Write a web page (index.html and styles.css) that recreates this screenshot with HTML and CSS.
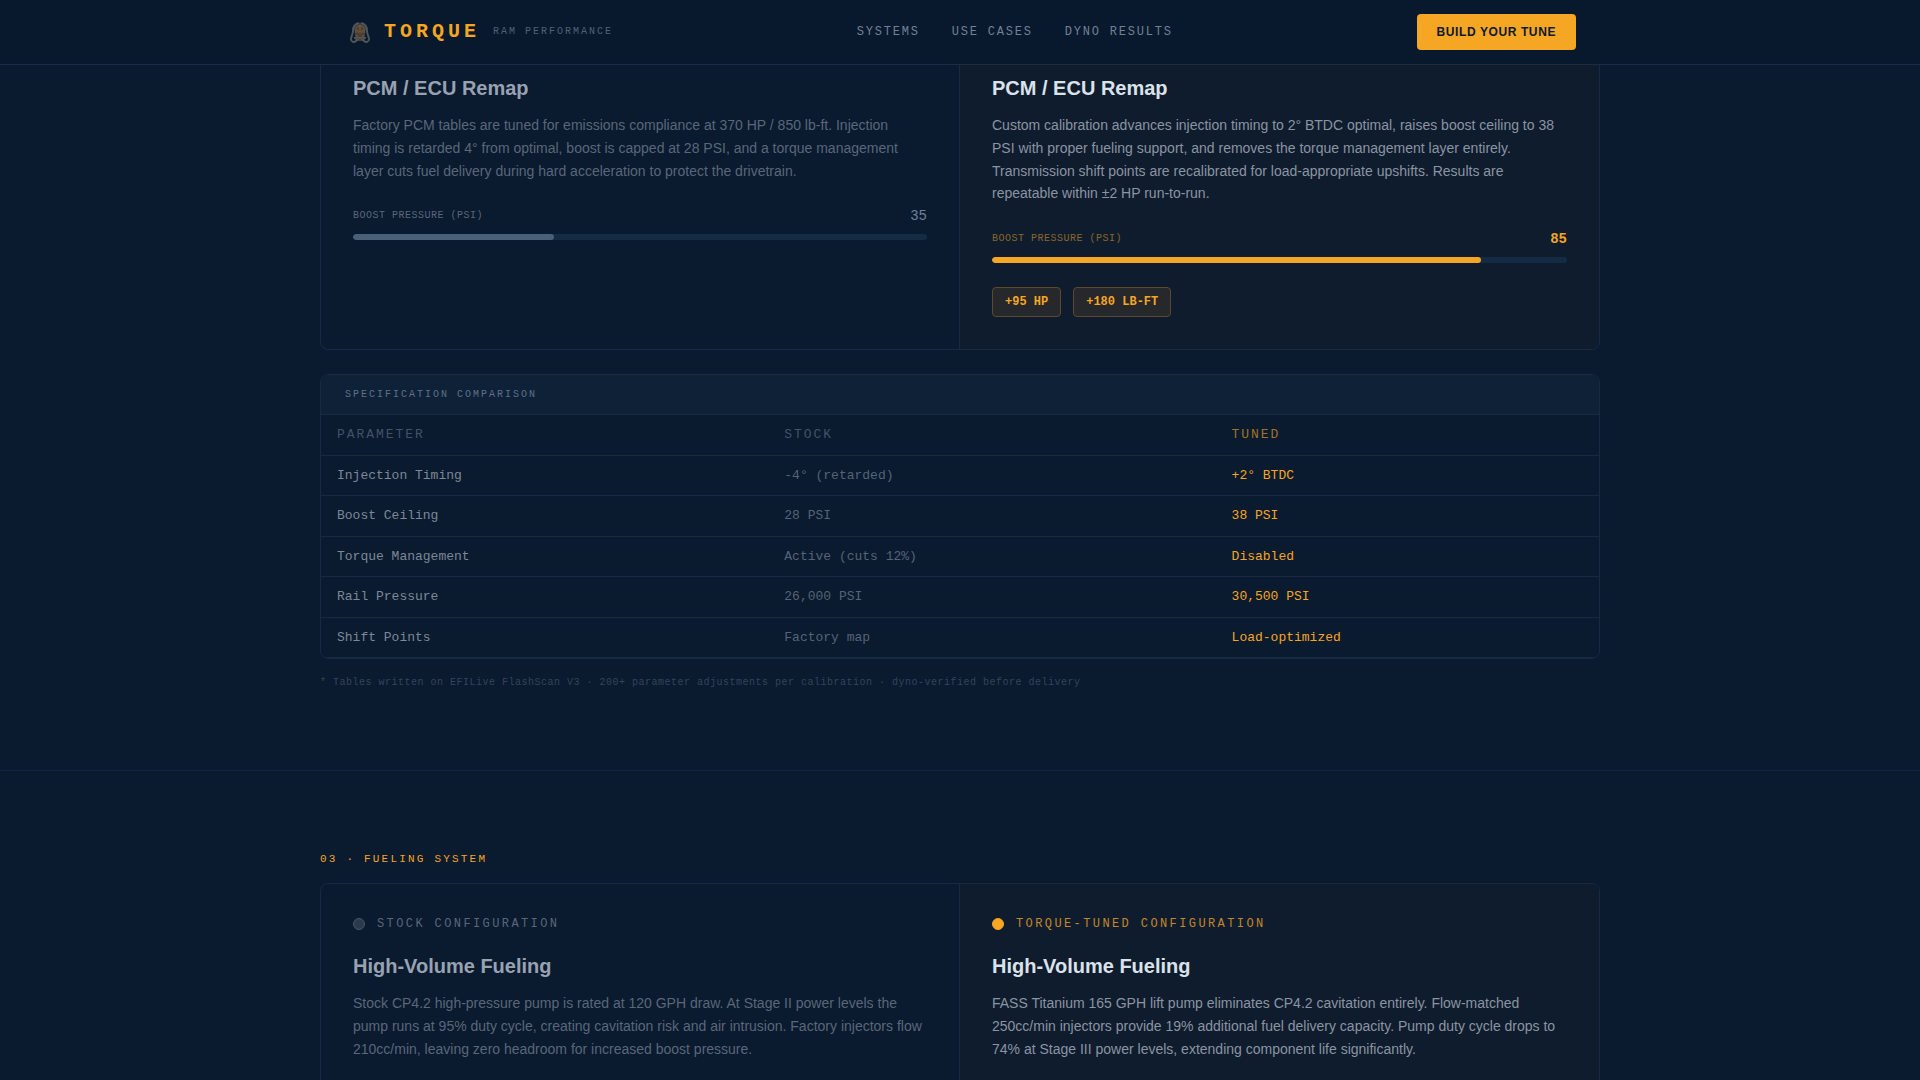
FILE: index.html
```html
<!DOCTYPE html>
<html lang="en">
<head>
    <meta charset="UTF-8">
    <meta name="viewport" content="width=device-width, initial-scale=1.0">
    <title>Torque Ram Performance</title>
    <link rel="stylesheet" href="styles.css">
</head>
<body>
    <header class="site-header">
        <div class="header-inner">
            <div class="brand">
                <svg class="brand-icon" viewBox="0 0 32 32" aria-hidden="true">
                    <path class="ram-head" d="M10 12 Q12 7 16 7 Q20 7 22 12 L21 19 L19 25 H13 L11 19 Z"/>
                    <path class="ram-horn" d="M15 7 C10 8 9 12 9 15 C9 19 7 20 7 23 C7 26 10 27 12 25 C13 23 12 21 10 22"/>
                    <path class="ram-horn" d="M17 7 C22 8 23 12 23 15 C23 19 25 20 25 23 C25 26 22 27 20 25 C19 23 20 21 22 22"/>
                    <path class="ram-brow" d="M12 17 C11 12 13 10 16 10 C19 10 21 12 20 17 M13 25 L16 21 L19 25"/>
                    <path class="ram-line" d="M13 14 L15 17 M19 14 L17 17 M12 19 L14 22 M20 19 L18 22 M16 9 V16"/>
                </svg>
                <span class="brand-name">TORQUE</span>
                <span class="brand-sub">RAM PERFORMANCE</span>
            </div>
            <nav class="nav">
                <a href="#systems">SYSTEMS</a>
                <a href="#use-cases">USE CASES</a>
                <a href="#dyno-results">DYNO RESULTS</a>
            </nav>
            <button class="cta" type="button">BUILD YOUR TUNE</button>
        </div>
    </header>

    <main id="systems">
        <section class="section section-ecu">
            <div class="container">
                <div class="compare">
                    <article class="panel stock">
                        <h3>PCM / ECU Remap</h3>
                        <p class="desc">Factory PCM tables are tuned for emissions compliance at 370 HP / 850 lb-ft. Injection timing is retarded 4° from optimal, boost is capped at 28 PSI, and a torque management layer cuts fuel delivery during hard acceleration to protect the drivetrain.</p>
                        <div class="meter">
                            <div class="meter-head">
                                <span class="meter-label">BOOST PRESSURE (PSI)</span>
                                <span class="meter-value">35</span>
                            </div>
                            <div class="track"><div class="fill" style="width: 35%"></div></div>
                        </div>
                    </article>
                    <article class="panel tuned">
                        <h3>PCM / ECU Remap</h3>
                        <p class="desc">Custom calibration advances injection timing to 2° BTDC optimal, raises boost ceiling to 38 PSI with proper fueling support, and removes the torque management layer entirely. Transmission shift points are recalibrated for load-appropriate upshifts. Results are repeatable within ±2 HP run-to-run.</p>
                        <div class="meter">
                            <div class="meter-head">
                                <span class="meter-label">BOOST PRESSURE (PSI)</span>
                                <span class="meter-value">85</span>
                            </div>
                            <div class="track"><div class="fill" style="width: 85%"></div></div>
                        </div>
                        <div class="gains">
                            <span class="gain">+95 HP</span>
                            <span class="gain">+180 LB-FT</span>
                        </div>
                    </article>
                </div>

                <div class="spec">
                    <div class="spec-title" id="spec-title">SPECIFICATION COMPARISON</div>
                    <table aria-labelledby="spec-title">
                        <thead>
                            <tr><th scope="col">PARAMETER</th><th scope="col">STOCK</th><th scope="col">TUNED</th></tr>
                        </thead>
                        <tbody>
                            <tr><td>Injection Timing</td><td>-4° (retarded)</td><td>+2° BTDC</td></tr>
                            <tr><td>Boost Ceiling</td><td>28 PSI</td><td>38 PSI</td></tr>
                            <tr><td>Torque Management</td><td>Active (cuts 12%)</td><td>Disabled</td></tr>
                            <tr><td>Rail Pressure</td><td>26,000 PSI</td><td>30,500 PSI</td></tr>
                            <tr><td>Shift Points</td><td>Factory map</td><td>Load-optimized</td></tr>
                        </tbody>
                    </table>
                </div>
                <p class="footnote">* Tables written on EFILive FlashScan V3 · 200+ parameter adjustments per calibration · dyno-verified before delivery</p>
            </div>
        </section>

        <section class="section">
            <div class="container">
                <h2 class="eyebrow">03 · FUELING SYSTEM</h2>
                <div class="compare">
                    <article class="panel stock">
                        <div class="config"><span class="dot"></span>STOCK CONFIGURATION</div>
                        <h3>High-Volume Fueling</h3>
                        <p class="desc">Stock CP4.2 high-pressure pump is rated at 120 GPH draw. At Stage II power levels the pump runs at 95% duty cycle, creating cavitation risk and air intrusion. Factory injectors flow 210cc/min, leaving zero headroom for increased boost pressure.</p>
                    </article>
                    <article class="panel tuned">
                        <div class="config"><span class="dot"></span>TORQUE-TUNED CONFIGURATION</div>
                        <h3>High-Volume Fueling</h3>
                        <p class="desc">FASS Titanium 165 GPH lift pump eliminates CP4.2 cavitation entirely. Flow-matched 250cc/min injectors provide 19% additional fuel delivery capacity. Pump duty cycle drops to 74% at Stage III power levels, extending component life significantly.</p>
                    </article>
                </div>
            </div>
        </section>
    </main>
</body>
</html>
```

FILE: styles.css
```css
:root {
    --bg: #0a1a2f;
    --strip: #0f2137;
    --line: #162a42;
    --amber: #f5a623;
    --mono: "Liberation Mono", "Courier New", monospace;
}

* {
    box-sizing: border-box;
    margin: 0;
    padding: 0;
}

body {
    height: 100vh;
    overflow: hidden;
    background: var(--bg);
    color: #dbe2ea;
    font-family: "Liberation Sans", Arial, sans-serif;
    line-height: 1.5;
}

/* header */
.site-header {
    position: sticky;
    top: 0;
    z-index: 10;
    background: #09192d;
    border-bottom: 1px solid #1a2d43;
}

.header-inner {
    display: flex;
    align-items: center;
    justify-content: space-between;
    max-width: 1280px;
    height: 64px;
    margin: 0 auto;
    padding: 0 24px;
}

.brand {
    display: flex;
    align-items: center;
}

.brand-icon {
    width: 32px;
    height: 32px;
    margin-right: 8px;
    fill: none;
}

.ram-head {
    fill: #4a3f35;
}

.ram-horn {
    stroke: #4c545c;
    stroke-width: 2;
}

.ram-brow {
    stroke: #5f5e5b;
}

.ram-line {
    stroke: #85602f;
}

.brand-name {
    margin-right: 13px;
    color: var(--amber);
    font: bold 20px/28px var(--mono);
    letter-spacing: 0.2em;
}

.brand-sub {
    color: #526074;
    font: 10px/16px var(--mono);
    letter-spacing: 0.2em;
}

.nav {
    display: flex;
    gap: 32px;
}

.nav a {
    color: #718096;
    font: 12px/16px var(--mono);
    letter-spacing: 0.15em;
    text-decoration: none;
}

.cta {
    padding: 10px 20px;
    border: none;
    border-radius: 4px;
    background: var(--amber);
    color: #0a192f;
    font: bold 12px/16px "Liberation Sans", Arial, sans-serif;
    letter-spacing: 0.05em;
    cursor: pointer;
}

/* sections */
.section {
    padding: 80px 0;
}

.section-ecu {
    padding-top: 0;
    border-bottom: 1px solid #12243a;
}

.container {
    max-width: 1280px;
    margin: 0 auto;
}

.eyebrow {
    margin-bottom: 16px;
    color: var(--amber);
    font: 11px/16px var(--mono);
    letter-spacing: 0.2em;
}

/* stock / tuned panels */
.compare {
    display: grid;
    grid-template-columns: 1fr 1fr;
    border: 1px solid var(--line);
    border-radius: 8px;
    overflow: hidden;
}

.section-ecu .compare {
    border-top: none;
    border-radius: 0 0 8px 8px;
}

.panel {
    padding: 32px;
}

.section-ecu .panel {
    padding-top: 9px;
}

.stock {
    border-right: 1px solid var(--line);
}

.tuned {
    background: #0f1c2d;
}

.config {
    display: flex;
    align-items: center;
    gap: 12px;
    margin-bottom: 20px;
    color: #5a6779;
    font: 12px/16px var(--mono);
    letter-spacing: 0.2em;
}

.tuned .config {
    color: #c2872a;
}

.dot {
    width: 12px;
    height: 12px;
    border: 1px solid #4a5568;
    border-radius: 50%;
    background: #2d3a4c;
}

.tuned .dot {
    border-color: var(--amber);
    background: var(--amber);
}

.panel h3 {
    margin-bottom: 12px;
    font-size: 20px;
    line-height: 28px;
}

.stock h3 {
    color: #98a2b1;
}

.desc {
    color: #8a94a2;
    font-size: 14px;
    line-height: 1.625;
}

.stock .desc {
    color: #5a6779;
}

.meter {
    margin-top: 24px;
}

.meter-head {
    display: flex;
    align-items: center;
    justify-content: space-between;
    margin-bottom: 8px;
}

.meter-label {
    color: #5a6779;
    font: 10px/16px var(--mono);
    letter-spacing: 0.05em;
}

.tuned .meter-label {
    color: #8a662c;
}

.meter-value {
    color: #718096;
    font: 14px/20px var(--mono);
}

.tuned .meter-value {
    color: var(--amber);
    font-weight: bold;
}

.track {
    height: 6px;
    border-radius: 3px;
    background: #152a43;
    overflow: hidden;
}

.fill {
    height: 100%;
    border-radius: 3px;
    background: #4a5f78;
}

.tuned .fill {
    background: var(--amber);
}

.gains {
    display: flex;
    gap: 12px;
    margin-top: 24px;
}

.gain {
    padding: 6px 12px;
    border: 1px solid #5e4a2a;
    border-radius: 4px;
    background: #26282c;
    color: var(--amber);
    font: bold 12px/16px var(--mono);
}

/* spec table */
.spec {
    margin-top: 24px;
    border: 1px solid var(--line);
    border-radius: 8px;
    overflow: hidden;
}

.spec-title {
    padding: 12px 24px;
    border-bottom: 1px solid var(--line);
    background: var(--strip);
    color: #5f7085;
    font: 10px/15px var(--mono);
    letter-spacing: 0.2em;
}

table {
    width: 100%;
    border-collapse: collapse;
    table-layout: fixed;
    font-family: var(--mono);
    font-size: 13px;
}

th, td {
    width: 35%;
    padding: 10px 16px;
    border-bottom: 1px solid var(--line);
    color: #566376;
    text-align: left;
}

th {
    color: #445268;
    font-weight: normal;
    letter-spacing: 0.15em;
}

td:first-child {
    color: #7d8896;
}

th:last-child, td:last-child {
    width: 30%;
}

th:last-child {
    color: #a07228;
}

td:last-child {
    color: var(--amber);
}

.footnote {
    margin-top: 16px;
    color: #35445a;
    font: 10px/15px var(--mono);
    letter-spacing: 0.05em;
}
```
